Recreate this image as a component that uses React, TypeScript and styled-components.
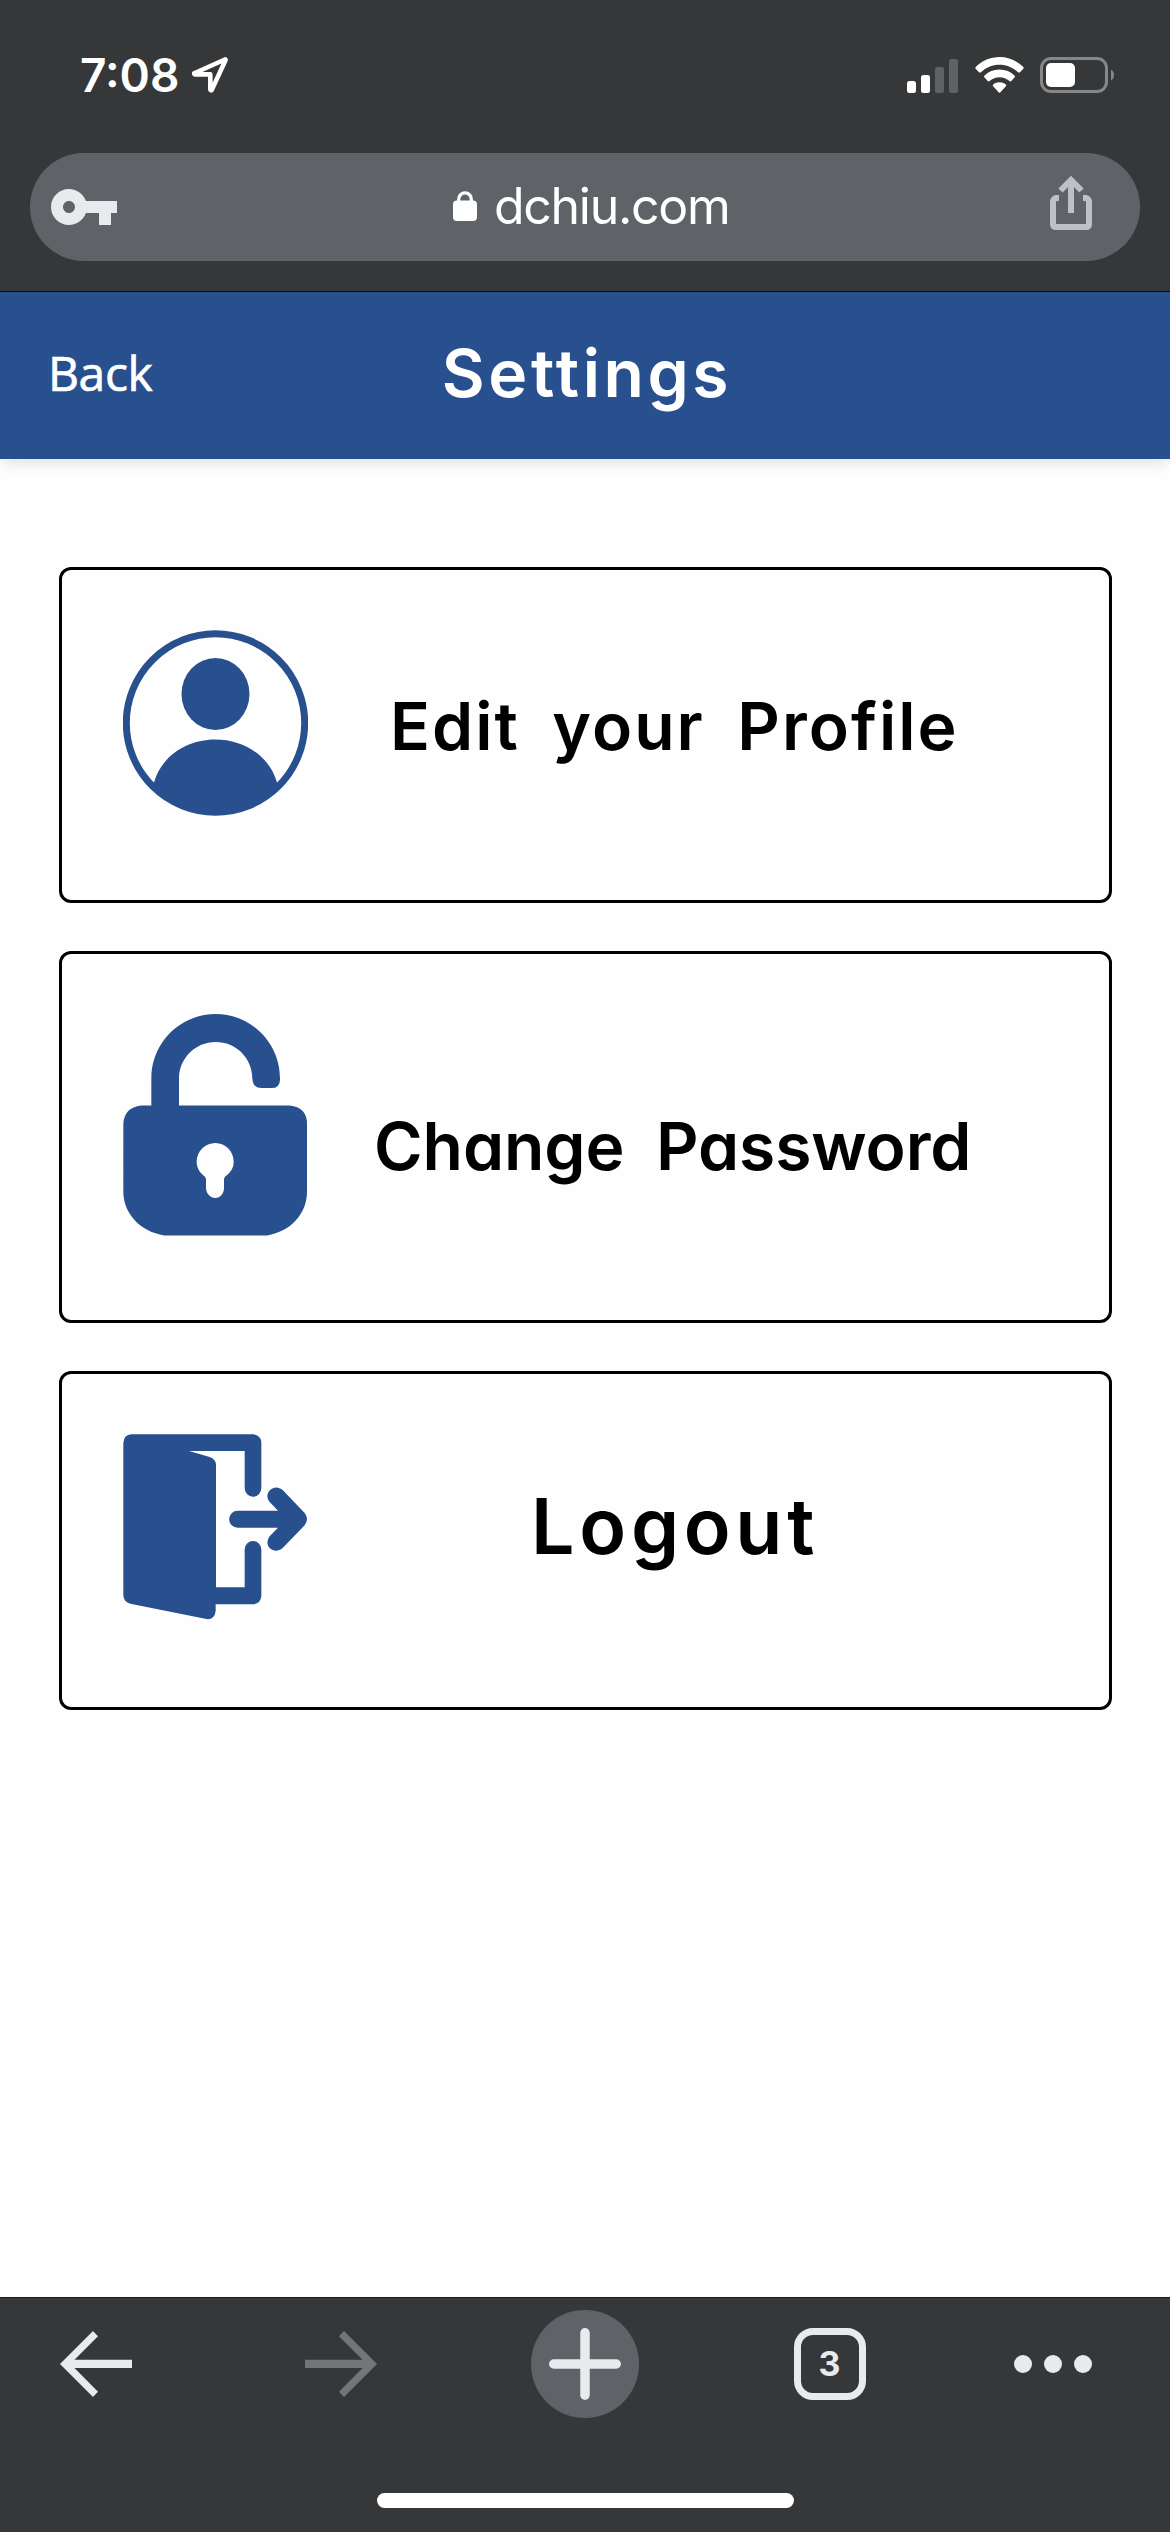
import React from "react";
import styled, { createGlobalStyle } from "styled-components";

const BLUE = "#28508e";
const CHROME = "#363739";
const PILL = "#5f6368";
const ICON = "#e8eaed";

const GlobalStyle = createGlobalStyle`
  * { box-sizing: border-box; }
  html, body { margin: 0; padding: 0; background: #fefefe; }
  body { font-family: Inter, "Liberation Sans", sans-serif; }
  svg { display: block; flex: none; }
`;

const Screen = styled.div`
  display: flex;
  flex-direction: column;
  width: 1170px;
  height: 2532px;
  overflow: hidden;
  background: #fefefe;
`;

const BrowserTop = styled.header`
  display: flex;
  flex-direction: column;
  flex: none;
  height: 292px;
  background: ${CHROME};
  border-bottom: 1px solid #0b0c0e;
`;

const StatusBar = styled.div`
  display: flex;
  justify-content: space-between;
  align-items: center;
  height: 153px;
  padding: 0 55px 4px 80px;
`;

const StatusGroup = styled.div<{ $gap: number }>`
  display: flex;
  align-items: center;
  gap: ${(p) => p.$gap}px;
`;

const Clock = styled.span`
  width: 99px;
  font-size: 46px;
  font-weight: 600;
  line-height: 60px;
  letter-spacing: 0;
  white-space: nowrap;
  color: #fff;
`;

const AddressBar = styled.div`
  display: grid;
  grid-template-columns: 1fr auto 1fr;
  align-items: center;
  height: 108px;
  margin: 0 30px;
  padding: 0 48px 0 18px;
  border-radius: 54px;
  background: ${PILL};
`;

const Address = styled.div`
  display: flex;
  align-items: center;
  gap: 17.5px;
  margin-left: 42px;
  padding-bottom: 3px;
`;

const Host = styled.span`
  font-size: 50px;
  line-height: 60px;
  letter-spacing: -1.3px;
  color: #fff;
`;

const ShareSlot = styled.div`
  justify-self: end;
  padding-bottom: 8px;
`;

const PageHeader = styled.div`
  display: grid;
  grid-template-columns: 1fr auto 1fr;
  align-items: center;
  flex: none;
  height: 167px;
  padding: 0 48px 5px;
  background: ${BLUE};
  color: #fff;
  box-shadow: 0 6px 14px -2px rgba(0, 0, 0, 0.12);
`;

const BackLink = styled.a`
  font-family: "Open Sans", "Noto Sans", sans-serif;
  font-size: 48px;
  font-weight: 500;
  line-height: 60px;
  letter-spacing: -0.4px;
  -webkit-text-stroke: 0.7px #fff;
`;

const Title = styled.h1`
  margin: 0;
  padding-left: 4px;
  font-size: 66px;
  font-weight: 600;
  line-height: 80px;
  letter-spacing: 3.6px;
  font-feature-settings: "cv11";
`;

const Content = styled.main`
  display: flex;
  flex-direction: column;
  flex: 1;
  gap: 48px;
  padding: 108px 58px 0 59px;
`;

const Card = styled.div<{ $height: number }>`
  display: flex;
  align-items: flex-start;
  flex: none;
  height: ${(p) => p.$height}px;
  padding: 60px 70px 0 60.5px;
  border: 3px solid #000;
  border-radius: 12px;
  background: #fefefe;
`;

const CardLabel = styled.span<{ $top: number; $size: number; $track: number; $word?: number }>`
  flex: 1;
  margin-top: ${(p) => p.$top}px;
  padding-left: ${(p) => p.$track}px;
  font-size: ${(p) => p.$size}px;
  font-weight: 600;
  line-height: 80px;
  letter-spacing: ${(p) => p.$track}px;
  word-spacing: ${(p) => p.$word ?? 0}px;
  font-feature-settings: "cv11";
  text-align: center;
  white-space: nowrap;
  color: #000;
`;

const BottomBar = styled.footer`
  display: flex;
  flex-direction: column;
  align-items: center;
  justify-content: space-between;
  flex: none;
  height: 235px;
  padding: 12px 0 24px;
  border-top: 1px solid #1c1d1f;
  background: ${CHROME};
`;

const Toolbar = styled.nav`
  display: flex;
  justify-content: space-between;
  width: 100%;
  height: 108px;
  padding: 0 42px;
`;

const ToolSlot = styled.div<{ $shift?: number }>`
  display: flex;
  align-items: center;
  justify-content: center;
  width: 108px;
  height: 108px;
  margin-left: ${(p) => -(p.$shift ?? 0)}px;
  margin-right: ${(p) => p.$shift ?? 0}px;
`;

const NewTab = styled(ToolSlot)`
  border-radius: 50%;
  background: ${PILL};
`;

const TabCount = styled.div`
  display: grid;
  place-items: center;
  width: 72px;
  height: 72px;
  border: 7.5px solid ${ICON};
  border-radius: 19px;
  font-size: 34px;
  font-weight: 700;
  line-height: 40px;
  color: ${ICON};
`;

const HomeIndicator = styled.div`
  width: 417px;
  height: 15px;
  border-radius: 8px;
  background: #fff;
`;

const LocationIcon = () => (
  <svg width="38" height="38" viewBox="0 0 38 38">
    <path d="M34 3.5 3.8 17a.7.7 0 0 0 .3 1.4H19.3V33.6a.8.8 0 0 0 1.5.3L34.6 4a.4.4 0 0 0-.6-.5Z" fill="none" stroke="#fff" strokeWidth="4.600" strokeLinejoin="round" />
  </svg>
);

const SignalIcon = () => (
  <svg width="51" height="36" viewBox="0 0 51 36" fill="#fff">
    <rect x="0" y="24" width="9" height="12" rx="2.5" />
    <rect x="14" y="18" width="9" height="18" rx="2.5" />
    <rect x="28" y="10" width="9" height="26" rx="2.5" fill="#606163" />
    <rect x="42" y="2" width="9" height="34" rx="2.5" fill="#606163" />
  </svg>
);

const WifiIcon = () => (
  <svg width="49" height="36" viewBox="344 105 147 108" fill="#fff">
    <path d="M417.500 105C444 105 470 116 489 135Q491 137.500 489 140L479 151Q476 153 473.500 151C458 136 438 128 417.500 128S377 136 361.500 151Q359 153 356 151L346 140Q344 137.500 346 135C365 116 391 105 417.500 105Z" />
    <path d="M417.500 142.500C435 142.500 451 149 463 161Q465.500 163.500 463 166L453 177Q450.500 179.500 447.500 177C439 169.500 428.500 165.500 417.500 165.500S396 169.500 387.500 177Q384.500 179.500 382 177L372 166Q369.500 163.500 372 161C384 149 400 142.500 417.500 142.500Z" />
    <path d="M417.500 180.500C425 180.500 431 183 436.500 187.500Q439 190 436.500 192.500L419.500 211.500Q417.500 213.500 415.500 211.500L398.500 192.500Q396 190 398.500 187.500C404 183 410 180.500 417.500 180.500Z" />
  </svg>
);

const BatteryIcon = () => (
  <svg width="75" height="36" viewBox="0 0 75 36">
    <rect x="1.500" y="1.500" width="65" height="33" rx="9.500" fill="none" stroke="#868788" strokeWidth="3" />
    <rect x="6" y="6" width="29" height="24" rx="5" fill="#fff" />
    <path d="M71 12.500a6.500 6.500 0 0 1 0 11Z" fill="#868788" />
  </svg>
);

const KeyIcon = () => (
  <svg width="72" height="72" viewBox="0 0 24 24" fill={ICON}>
    <path d="M12.650 10C11.830 7.670 9.610 6 7 6c-3.310 0-6 2.690-6 6s2.690 6 6 6c2.610 0 4.830-1.670 5.650-4H17v4h4v-4h2v-4H12.650zM7 14c-1.100 0-2-.9-2-2s.9-2 2-2 2 .9 2 2-.9 2-2 2z" />
  </svg>
);

const SecureIcon = () => (
  <svg width="24" height="30" viewBox="0 0 24 30">
    <path d="M5.700 12V8.200a6.300 6.300 0 0 1 12.600 0V12" fill="none" stroke="#fff" strokeWidth="3.200" />
    <rect x="0" y="9.500" width="24" height="20.500" rx="4" fill="#fff" />
  </svg>
);

const ShareIcon = () => (
  <svg width="42" height="54" viewBox="0 0 42 54" fill="none" stroke="#bdc1c6" strokeWidth="6">
    <path d="M9 22H6.500A3.500 3.500 0 0 0 3 25.500V48.500A2.500 2.500 0 0 0 5.500 51H36.500A2.500 2.500 0 0 0 39 48.500V25.500A3.500 3.500 0 0 0 35.500 22H33" />
    <path d="M21 37V5M10.500 14.500 21 4 31.500 14.500" />
  </svg>
);

const ProfileIcon = () => (
  <svg width="185" height="186" viewBox="122.500 629.500 185 186" fill={BLUE}>
    <circle cx="215" cy="722.500" r="89.200" fill="none" stroke={BLUE} strokeWidth="7" />
    <ellipse cx="215" cy="693.500" rx="34" ry="36" />
    <path d="M153.700 781.500C161 756 186 739 215 739S269 756 276.300 781.500L277.700 784.500A88.300 88.300 0 0 1 152.300 784.500Z" />
  </svg>
);

const UnlockIcon = () => (
  <svg width="184" height="221.500" viewBox="248 252 552 664" fill={BLUE}>
    <path
      fillRule="evenodd"
      d="M302 526H333V445C333 338 419 252 526 252S719 338 719 445V448Q719 474 693 474H664Q638 474 636 446C636 384 587 336 526 336S416 385 416 446V526H748Q800 532 800 580V785C800 850 752 905 680 916H372C300 905 249 850 249 785V580Q252 532 302 526ZM525 639C494 639 469 664 469 695C469 714 479 729 493 739Q497 742 497 749V773C497 790 510 804 525 804S551 790 551 773V749Q551 742 556 738C571 727 580 714 580 695C580 664 556 639 525 639Z"
    />
  </svg>
);

const LogoutIcon = () => (
  <svg width="184" height="186" viewBox="248 253 552 558" fill={BLUE}>
    <path d="M273 254H638Q663 256 663 280V416A25 25 0 0 1 613 416V304H446L508 322Q526 329 527 344V713H613V599A25 25 0 0 1 663 599V739Q661 762 638 764H526V784Q523 808 502 809L270 762Q250 757 249 737V280Q250 256 273 254Z" />
    <path d="M592 483H713L688 457C670 434 691 411 712 414Q720 415 727 421L793 490Q807 508 793 527L727 595C706 613 677 598 682 573Q683 566 688 560L713 534H592A25.500 25.500 0 0 1 592 483Z" />
  </svg>
);

const ArrowIcon = ({ color, flip }: { color: string; flip?: boolean }) => (
  <svg width="72" height="66" viewBox="0 0 72 66" fill={color}>
    <g transform={flip ? "translate(72 0) scale(-1 1)" : undefined}>
      <path d="M33 0 38 5.200 14.500 28.800H72V37H14.500L38 60.800 33 66 0 33Z" />
    </g>
  </svg>
);

const PlusIcon = () => (
  <svg width="72" height="72" viewBox="0 0 72 72" stroke={ICON} strokeWidth="9.500" strokeLinecap="round">
    <path d="M36 4.750V67.250M4.750 36H67.250" />
  </svg>
);

const MoreIcon = () => (
  <svg width="78" height="18" viewBox="0 0 78 18" fill={ICON}>
    <circle cx="9" cy="9" r="9" />
    <circle cx="39" cy="9" r="9" />
    <circle cx="69" cy="9" r="9" />
  </svg>
);

export default function App() {
  return (
    <Screen>
      <GlobalStyle />
      <BrowserTop>
        <StatusBar>
          <StatusGroup $gap={12}>
            <Clock>7:08</Clock>
            <LocationIcon />
          </StatusGroup>
          <StatusGroup $gap={16.5}>
            <SignalIcon />
            <WifiIcon />
            <BatteryIcon />
          </StatusGroup>
        </StatusBar>
        <AddressBar>
          <KeyIcon />
          <Address>
            <SecureIcon />
            <Host>dchiu.com</Host>
          </Address>
          <ShareSlot>
            <ShareIcon />
          </ShareSlot>
        </AddressBar>
      </BrowserTop>
      <PageHeader>
        <BackLink>Back</BackLink>
        <Title>Settings</Title>
      </PageHeader>
      <Content>
        <Card $height={336}>
          <ProfileIcon />
          <CardLabel $top={56} $size={66} $track={2} $word={14}>Edit your Profile</CardLabel>
        </Card>
        <Card $height={372}>
          <UnlockIcon />
          <CardLabel $top={92} $size={66} $track={-0.1} $word={15}>Change Password</CardLabel>
        </Card>
        <Card $height={339}>
          <LogoutIcon />
          <CardLabel $top={52} $size={77} $track={4.7}>Logout</CardLabel>
        </Card>
      </Content>
      <BottomBar>
        <Toolbar>
          <ToolSlot>
            <ArrowIcon color={ICON} />
          </ToolSlot>
          <ToolSlot>
            <ArrowIcon color="#747577" flip />
          </ToolSlot>
          <NewTab>
            <PlusIcon />
          </NewTab>
          <ToolSlot>
            <TabCount>3</TabCount>
          </ToolSlot>
          <ToolSlot $shift={21}>
            <MoreIcon />
          </ToolSlot>
        </Toolbar>
        <HomeIndicator />
      </BottomBar>
    </Screen>
  );
}
